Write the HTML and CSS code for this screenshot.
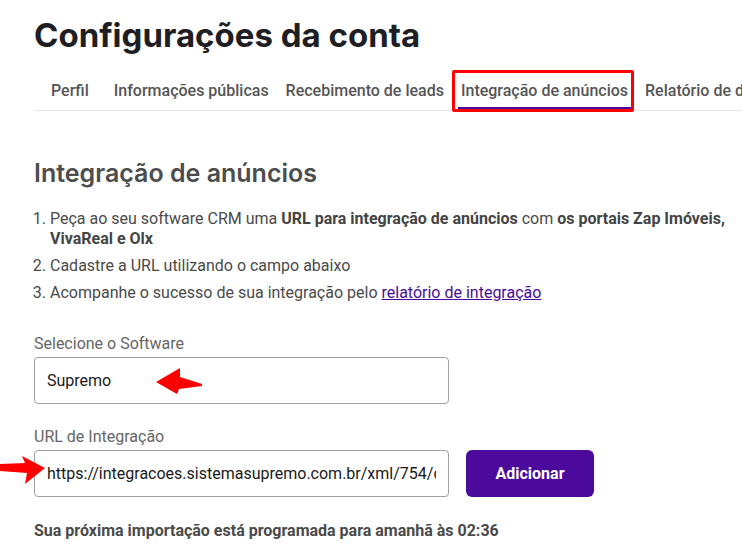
FILE: index.html
```html
<!DOCTYPE html>
<html lang="pt-BR">
<head>
<meta charset="utf-8">
<title>Configurações da conta</title>
<link rel="stylesheet" href="styles.css">
</head>
<body>
<main class="page">
  <h1 class="title">Configurações da conta</h1>
  <nav class="tabs">
    <a class="tab tab-first">Perfil</a>
    <a class="tab">Informações públicas</a>
    <a class="tab">Recebimento de leads</a>
    <a class="tab tab-active">Integração de anúncios<span class="highlight-box"></span></a>
    <a class="tab">Relatório de distribuição</a>
  </nav>

  <h2 class="section-title">Integração de anúncios</h2>
  <ol class="steps">
    <li>Peça ao seu software CRM uma <strong>URL para integração de anúncios</strong> com <strong>os portais Zap Imóveis, VivaReal e Olx</strong></li>
    <li>Cadastre a URL utilizando o campo abaixo</li>
    <li>Acompanhe o sucesso de sua integração pelo <a class="link">relatório de integração</a></li>
  </ol>

  <label class="field-label">Selecione o Software</label>
  <div class="field-row">
    <div class="field select-field">Supremo
      <svg class="arrow arrow-left" width="48" height="28" viewBox="0 0 48 28"><polygon points="1,15 25,1 25,10 47,17 47,19 24,22 22,27" fill="#ff0000"/></svg>
    </div>
  </div>

  <label class="field-label label-url">URL de Integração</label>
  <div class="field-row">
    <div class="field-wrap">
      <input class="field input-field" type="text" value="https://integracoes.sistemasupremo.com.br/xml/754/cadastro" readonly>
      <svg class="arrow arrow-right" width="46" height="31" viewBox="0 0 46 31"><polygon points="45,14 22,2 25,9 0,10 0,17 27,19 25,30" fill="#ff0000"/></svg>
    </div>
    <button class="btn-primary" type="button">Adicionar</button>
  </div>

  <p class="next-import">Sua próxima importação está programada para amanhã às 02:36</p>
</main>
</body>
</html>
```

FILE: styles.css
```css
html, body {
  margin: 0;
  padding: 0;
  background: #ffffff;
  overflow: hidden;
}

.page {
  padding: 15px 0 0 34px;
  font-family: Roboto, "Liberation Sans", Arial, sans-serif;
  font-size: 16px;
  color: #4a4a4a;
}

.title {
  margin: 0;
  font-family: Inter, "Noto Sans", sans-serif;
  font-weight: 700;
  font-size: 33px;
  line-height: 40px;
  color: #1e1e24;
  letter-spacing: 0;
}

.tabs {
  margin-top: 15px;
  display: flex;
  gap: 11px;
  white-space: nowrap;
  border-bottom: 1px solid #e6e6e6;
  height: 40px;
}

.tab {
  position: relative;
  display: flex;
  align-items: center;
  padding: 0 3px;
  height: 40px;
  box-sizing: border-box;
  font-weight: 500;
  font-size: 16px;
  color: #555555;
  border-bottom: 3px solid transparent;
  padding-top: 3px;
}

.tab-first {
  margin-left: 14px;
  margin-right: 8px;
}

.tab-active {
  border-bottom-color: #4b0a9c;
}

.highlight-box {
  position: absolute;
  left: -6px;
  right: -3px;
  top: 0;
  bottom: -5px;
  border: 3px solid #ff0000;
  border-radius: 2px;
}

.section-title {
  margin: 47px 0 0;
  font-family: Inter, "Noto Sans", sans-serif;
  font-weight: 600;
  font-size: 25px;
  line-height: 30px;
  color: #4d4d4d;
}

.steps {
  margin: 21px 0 0;
  padding-left: 16px;
  line-height: 20px;
  color: #4a4a4a;
}

.steps li {
  margin-bottom: 7px;
}

.steps li:last-child {
  margin-bottom: 0;
}

.steps strong {
  font-weight: 700;
  color: #444444;
}

.link {
  color: #4b0a9c;
  text-decoration: underline;
}

.field-label {
  display: block;
  margin-top: 31px;
  line-height: 20px;
  color: #666666;
  margin-bottom: 3px;
}

.label-url {
  margin-top: 23px;
}

.field-row {
  display: flex;
  gap: 17px;
}

.field-wrap {
  position: relative;
  width: 415px;
}

.field {
  position: relative;
  box-sizing: border-box;
  width: 415px;
  height: 47px;
  border: 1px solid #a0a0a0;
  border-radius: 4px;
  padding: 0 12px;
  display: flex;
  align-items: center;
  font-family: Roboto, "Liberation Sans", Arial, sans-serif;
  font-size: 16px;
  color: #1a1a1a;
  background: #ffffff;
}

.input-field {
  outline: none;
  margin: 0;
}

.arrow {
  position: absolute;
}

.arrow-left {
  left: 120px;
  top: 9px;
}

.arrow-right {
  left: -34px;
  top: 4px;
}

.btn-primary {
  width: 128px;
  height: 47px;
  border: none;
  border-radius: 6px;
  background: #4b0a9c;
  color: #ffffff;
  font-family: Roboto, "Liberation Sans", Arial, sans-serif;
  font-weight: 700;
  font-size: 16px;
  cursor: pointer;
}

.next-import {
  margin: 24px 0 0;
  line-height: 20px;
  font-weight: 700;
  font-size: 16px;
  color: #4a4a4a;
}
```
